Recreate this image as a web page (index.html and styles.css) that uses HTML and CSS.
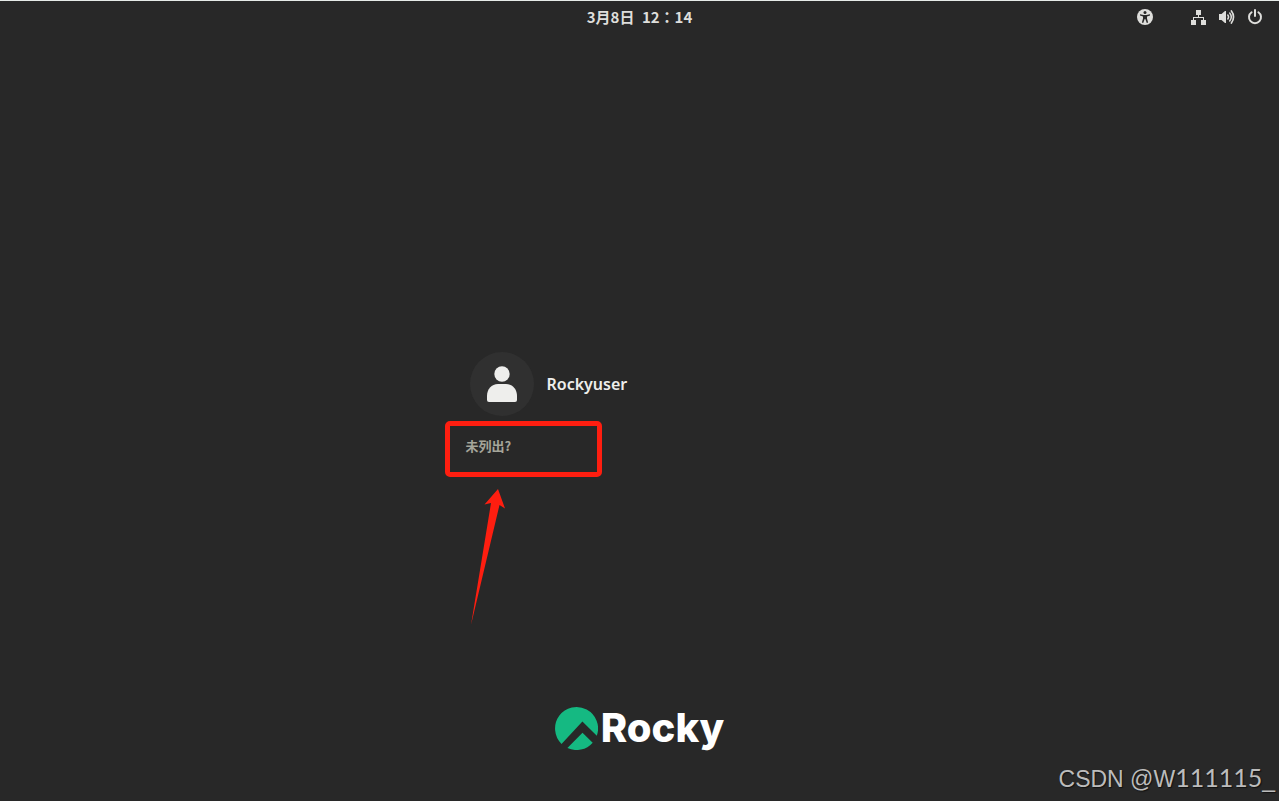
FILE: index.html
```html
<!DOCTYPE html>
<html lang="zh-CN">
<head>
<meta charset="utf-8">
<title>Rocky Linux</title>
<link rel="stylesheet" href="styles.css">
</head>
<body>
<div class="screen">
  <header class="topbar">
    <span></span>
    <time class="clock">3月8日&ensp;12<span class="colon" lang="zh-TW">：</span>14</time>
    <nav class="tray">
      <button class="icon access" aria-label="辅助功能"><svg viewBox="0 0 16 16"><circle cx="8" cy="8" r="8" fill="#dededb"/><g fill="#282828"><circle cx="8" cy="3.6" r="1.5"/><path d="M3 5.3 6.6 6h2.8L13 5.3v1.3l-3 .8v2l1.1 4.2-1.3.4L8.3 10h-.6l-1.5 4-1.3-.4L6 9.4v-2l-3-.8z"/></g></svg></button>
      <button class="icon" aria-label="网络"><svg viewBox="0 0 16 16"><path fill="#dededb" d="M5 1h5v5H8v2h5v3h2v5h-5v-5h2V9H3v2h2v5H0v-5h2V8h5V6H5z"/></svg></button>
      <button class="icon" aria-label="音量"><svg viewBox="0 0 16 16"><path fill="#dededb" d="M0 5h2.500L6 2h1v12H6l-3.500-3H0z"/><g fill="none" stroke="#dededb" stroke-linecap="round"><path stroke-width="1.500" d="M8.800 6c1 1.300 1 2.700 0 4M10.700 4c1.900 2.400 1.900 5.600 0 8"/><path stroke-width="1.700" d="M12.400 2c2.800 3.500 2.800 8.500 0 12"/></g></svg></button>
      <button class="icon" aria-label="电源"><svg viewBox="0 0 16 16"><g fill="none" stroke="#dededb" stroke-width="2" stroke-linecap="round"><path d="M8 1v6M4.600 3.200a6 6 0 1 0 6.800 0"/></g></svg></button>
    </nav>
  </header>
  <main class="login">
    <div class="users">
      <button class="user">
        <span class="avatar"><svg viewBox="0 0 64 64"><circle cx="32" cy="22" r="7.700" fill="#eeeeec"/><path fill="#eeeeec" d="M17 48v-4c0-7 4.500-12 11-12h8c6.500 0 11 5 11 12v4q0 2-2 2H19q-2 0-2-2z"/></svg></span>
        <span class="name">Rockyuser</span>
      </button>
      <div class="marked">
        <button class="unlisted">未列出?</button>
        <span class="frame"></span>
        <svg class="arrow" viewBox="0 0 36 138"><path fill="#fe1e10" d="M28 1 35 20.500 29.500 17 1 137 21 15 14.500 16.500z"/></svg>
      </div>
    </div>
  </main>
  <footer class="brand">
    <svg class="mark" viewBox="0 0 43 43"><path fill="#15b982" d="M6.500 36.900A21.500 21.500 0 1 1 41.800 28.800L27.400 14.600zM12.400 41 27.500 25.800 37.700 35.700A21.500 21.500 0 0 1 12.400 41z"/></svg>
    <span class="wordmark">Rocky</span>
  </footer>
  <div class="watermark">CSDN @W<span class="digits">111115</span>_</div>
</div>
</body>
</html>
```

FILE: styles.css
```css
* { box-sizing: border-box; }
body {
  margin: 0;
  background: #282828;
  color: #eeeeec;
  font-family: "Noto Sans", "Noto Sans CJK SC", sans-serif;
}
button {
  padding: 0;
  border: 0;
  background: none;
  color: inherit;
  font: inherit;
}
svg { display: block; width: 100%; height: 100%; }
.screen {
  position: relative;
  display: flex;
  flex-direction: column;
  min-height: 100vh;
  border-top: 1px solid #e6ebe8;
}
.topbar {
  display: grid;
  grid-template-columns: 1fr auto 1fr;
  align-items: center;
  height: 32px;
  padding: 0 16px;
}
.clock {
  color: #dededb;
  font: 700 15px/20px "Noto Sans CJK SC", sans-serif;
}
.colon { font-family: "Noto Sans CJK TC", sans-serif; }
.tray {
  display: flex;
  justify-content: flex-end;
  gap: 12px;
}
.icon { width: 16px; height: 16px; }
.access { margin-right: 26px; }
.login {
  display: flex;
  flex: 1;
  flex-direction: column;
  align-items: center;
  justify-content: center;
  padding-top: 88px;
}
.users { width: 350px; }
.user {
  display: flex;
  align-items: center;
  gap: 13px;
  width: 100%;
  padding: 0 5px;
  text-align: left;
}
.avatar {
  width: 64px;
  height: 64px;
  border-radius: 50%;
  background: #303030;
}
.name { font-size: 16px; font-weight: 600; line-height: 24px; }
.marked { position: relative; height: 60px; }
.unlisted {
  padding: 20px 1px;
  color: #a5a59a;
  font: 700 13px/20px "Noto Sans CJK SC", sans-serif;
}
.frame {
  position: absolute;
  top: 5px;
  left: -20px;
  width: 157px;
  height: 56px;
  border: 5px solid #fe1e10;
  border-radius: 5px;
  pointer-events: none;
}
.arrow {
  position: absolute;
  top: 72px;
  left: 5px;
  width: 36px;
  height: 138px;
}
.brand {
  display: flex;
  align-items: center;
  justify-content: center;
  gap: 3px;
  height: 44px;
  margin-bottom: 51px;
}
.mark { width: 43px; height: 43px; }
.wordmark {
  color: #fff;
  font: 800 40px/44px Inter, sans-serif;
}
.watermark {
  position: absolute;
  right: 4px;
  bottom: 8px;
  color: #bcbcbc;
  font: 23px/28px "Liberation Sans", sans-serif;
  text-shadow: 1px 1px 1px #111;
}
.digits { font-family: Lato, sans-serif; font-size: 25px; }
```
